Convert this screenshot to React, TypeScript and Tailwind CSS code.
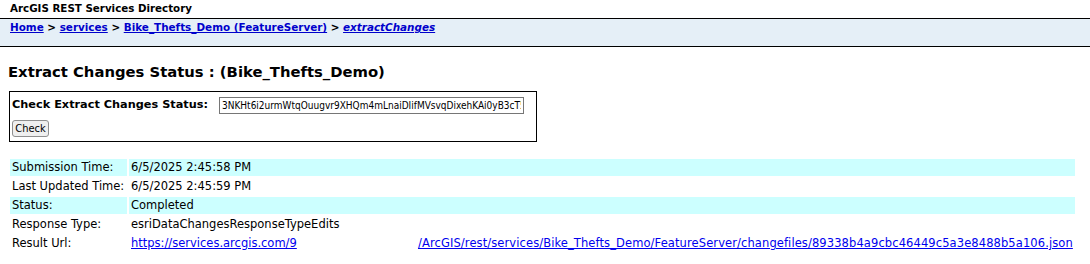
export default function App() {
  const rows: { label: string; value: string; shaded: boolean; link?: boolean }[] = [
    { label: 'Submission Time:', value: '6/5/2025 2:45:58 PM', shaded: true },
    { label: 'Last Updated Time:', value: '6/5/2025 2:45:59 PM', shaded: false },
    { label: 'Status:', value: 'Completed', shaded: true },
    { label: 'Response Type:', value: 'esriDataChangesResponseTypeEdits', shaded: false },
    { label: 'Result Url:', value: '', shaded: false, link: true },
  ];

  return (
    <div className="w-[1090px] h-[264px] bg-white overflow-hidden text-black font-['DejaVu_Sans','Verdana',sans-serif]">
      {/* Title */}
      <div className="h-[18px] pl-[10px] pt-[1px] text-[10.3px] font-bold leading-[14px]">
        ArcGIS REST Services Directory
      </div>

      {/* Breadcrumbs */}
      <div className="h-[29px] border-y border-black bg-[#e5eff7] pl-[10px] pt-[1px] text-[10.4px] font-bold leading-[14px]">
        <a className="text-[#0000cc] underline">Home</a>
        {' > '}
        <a className="text-[#0000cc] underline">services</a>
        {' > '}
        <a className="text-[#0000cc] underline">Bike_Thefts_Demo (FeatureServer)</a>
        {' > '}
        <a className="text-[#0000cc] underline italic">extractChanges</a>
      </div>

      {/* Heading */}
      <h2 className="pl-[8px] pt-[16px] h-[44px] text-[14.8px] font-bold leading-[18px]">
        Extract Changes Status : (Bike_Thefts_Demo)
      </h2>

      {/* Form */}
      <div className="ml-[9px] w-[528px] h-[51px] border border-black pl-[2px] pt-[4px]">
        <div className="flex items-center h-[18px]">
          <span className="text-[11.3px] font-bold w-[207px] whitespace-nowrap">Check Extract Changes Status:</span>
          <input
            readOnly
            value="3NKHt6i2urmWtqOuugvr9XHQm4mLnaiDIifMVsvqDixehKAi0yB3cT5"
            className="w-[305px] h-[17px] border border-[#767676] px-[2px] text-[10px] leading-[15px] font-['DejaVu_Sans_Condensed','DejaVu_Sans',sans-serif] outline-none"
          />
        </div>
        <button className="mt-[6px] w-[37px] h-[17px] border border-[#8f8f8f] rounded-[3px] bg-[#efefef] text-[11px] leading-[15px] font-['DejaVu_Sans_Condensed','DejaVu_Sans',sans-serif]">
          Check
        </button>
      </div>

      {/* Status table */}
      <table className="ml-[8px] mt-[15px] w-[1069px] border-separate border-spacing-[2px] text-[11.5px]">
        <tbody>
          {rows.map((r) => (
            <tr key={r.label} className="h-[17px]">
              <td className={`w-[117px] p-0 pl-[2px] leading-[17px] whitespace-nowrap ${r.shaded ? 'bg-[#ccffff]' : ''}`}>
                {r.label}
              </td>
              <td className={`p-0 pl-[2px] leading-[17px] whitespace-nowrap ${r.shaded ? 'bg-[#ccffff]' : ''}`}>
                {r.link ? (
                  <span className="inline-flex">
                    <a className="inline-block w-[169px] overflow-hidden whitespace-nowrap text-[#0000ee] underline">
                      https://services.arcgis.com/9
                    </a>
                    <a className="ml-[118px] tracking-[0.1px] text-[#0000ee] underline">
                      /ArcGIS/rest/services/Bike_Thefts_Demo/FeatureServer/changefiles/89338b4a9cbc46449c5a3e8488b5a106.json
                    </a>
                  </span>
                ) : (
                  r.value
                )}
              </td>
            </tr>
          ))}
        </tbody>
      </table>
    </div>
  );
}
